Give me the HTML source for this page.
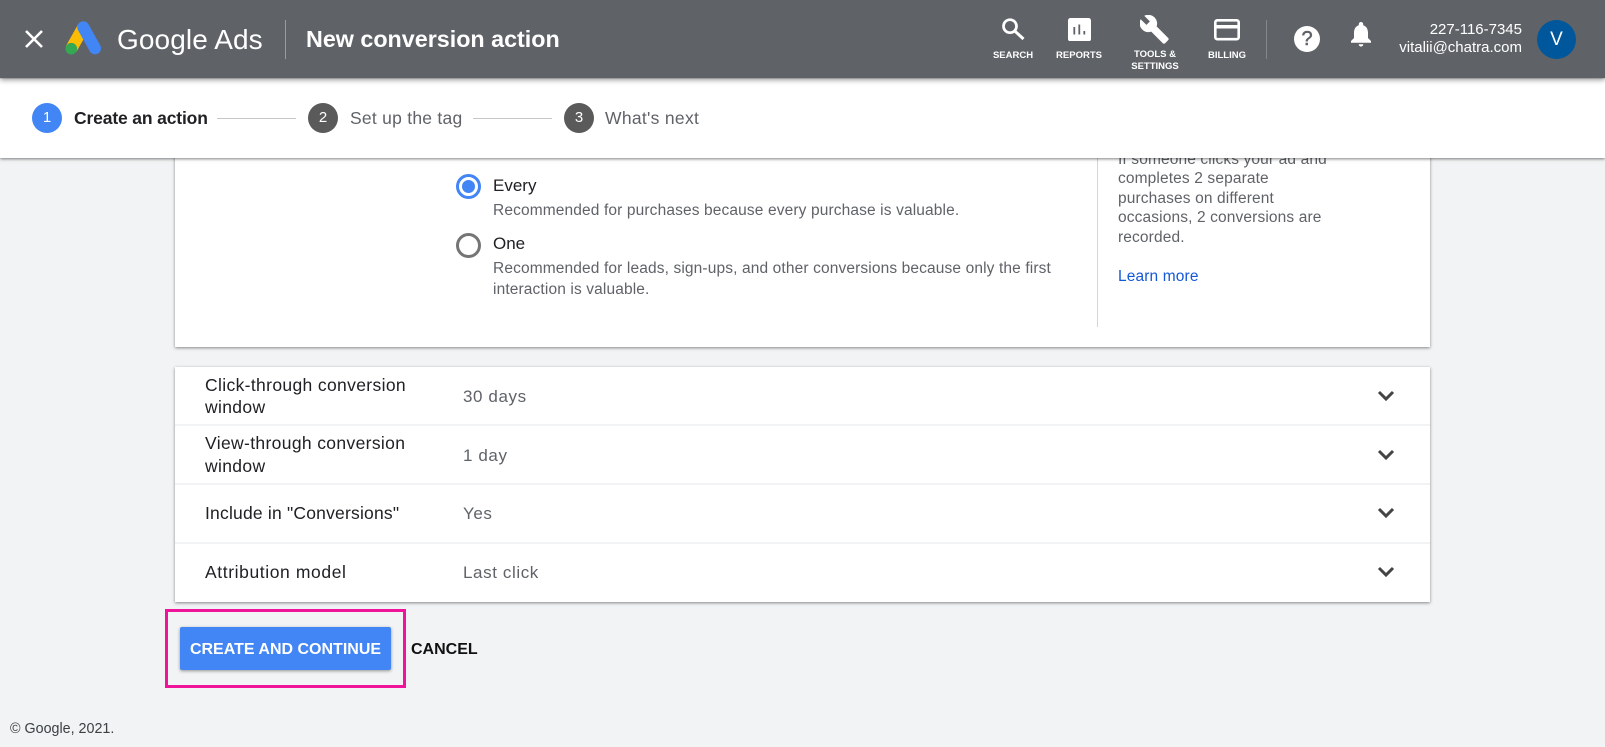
<!DOCTYPE html>
<html><head><meta charset="utf-8"><style>
html,body{margin:0;padding:0}
body{width:1605px;height:747px;position:relative;overflow:hidden;background:#f1f3f4;font-family:"Liberation Sans",sans-serif}
.t{position:absolute;white-space:nowrap;line-height:20px}
.abs{position:absolute}
.lab{font-size:9.5px;font-weight:bold;color:#fff;text-align:center;transform:translateX(-50%);line-height:12px}
.num{position:absolute;width:30px;height:30px;border-radius:50%;color:#fff;font-size:15px;line-height:30px;text-align:center;background:#5a5a5a;top:103px}
.line{position:absolute;height:1px;background:#c4c6c8;top:118px}
.row{font-size:17.5px;color:#202124;letter-spacing:.35px}
.val{font-size:17px;color:#5f6368;letter-spacing:.6px}
.sub{font-size:15.5px;color:#5f6368;letter-spacing:.13px}
.div{position:absolute;left:175px;width:1255px;height:2px;background:#f1f3f4}
</style></head><body>
<div class="abs" style="left:175px;top:100px;width:1255px;height:247px;background:#fff;box-shadow:0 1px 3px rgba(0,0,0,.45)"></div>
<div class="abs" style="left:1097px;top:150px;width:1px;height:177px;background:#d5d7d9"></div>
<div class="abs" style="left:175px;top:367px;width:1255px;height:235px;background:#fff;box-shadow:0 1px 3px rgba(0,0,0,.45)"></div>
<div class="div" style="top:424px"></div><div class="div" style="top:483px"></div><div class="div" style="top:542px"></div>

<div class="t sub" style="left:1118px;top:150px">If someone clicks your ad and</div>
<div class="t sub" style="left:1118px;top:169px">completes 2 separate</div>
<div class="t sub" style="left:1118px;top:189px">purchases on different</div>
<div class="t sub" style="left:1118px;top:208px">occasions, 2 conversions are</div>
<div class="t sub" style="left:1118px;top:228px">recorded.</div>
<div class="t sub" style="left:1118px;top:267px;color:#1558d6">Learn more</div>

<div class="abs" style="left:0;top:79px;width:1605px;height:78.500px;background:#fff;box-shadow:0 1px 3px rgba(0,0,0,.5)"></div>
<div class="abs" style="left:0;top:0;width:1605px;height:78px;background:#5f6368;box-shadow:0 2px 5px rgba(0,0,0,.4)"></div>

<svg class="abs" style="left:25px;top:30px" width="18" height="18" viewBox="0 0 18 18"><path d="M1 1L17 17M17 1L1 17" stroke="#fff" stroke-width="2.600" fill="none"/></svg>
<svg class="abs" style="left:64px;top:21px" width="40" height="34" viewBox="0 0 40 34">
<path d="M19.500 6L7.300 27.700" stroke="#fbbc04" stroke-width="12"/>
<path d="M19.300 6.300L31 27.300" stroke="#4285f4" stroke-width="12" stroke-linecap="round"/>
<circle cx="7.300" cy="27.700" r="5.800" fill="#34a853"/></svg>
<div class="t" style="left:117px;top:26px;font-size:28px;line-height:28px;color:#fff;letter-spacing:.1px">Google Ads</div>
<div class="abs" style="left:285px;top:20px;width:1px;height:39px;background:#9a9da0"></div>
<div class="t" style="left:306px;top:27px;font-size:23.300px;line-height:24px;font-weight:bold;color:#fff">New conversion action</div>

<svg class="abs" style="left:1001px;top:17px" width="25" height="25" viewBox="0 0 25 25"><circle cx="9" cy="9.200" r="6.500" stroke="#fff" stroke-width="2.700" fill="none"/><path d="M13.800 14L22.500 22" stroke="#fff" stroke-width="3"/></svg>
<svg class="abs" style="left:1068px;top:17.500px" width="23" height="23.500" viewBox="0 0 23 23.500"><rect width="23" height="23.500" rx="2.500" fill="#fff"/><path d="M6.300 9v7.500M11.300 6.500v10M16.300 13v3.500" stroke="#5f6368" stroke-width="1.800"/></svg>
<svg class="abs" style="left:1140px;top:15px" width="29" height="29" viewBox="1 1 22.500 22.500"><path fill="#fff" stroke="#fff" stroke-width=".5" d="M22.700 19l-9.100-9.100c.9-2.300.4-5-1.500-6.900-2-2-5-2.400-7.400-1.300L9 6 6 9 1.600 4.700C.4 7.100.9 10.100 2.900 12.100c1.900 1.900 4.600 2.400 6.900 1.500l9.100 9.100c.4.400 1 .4 1.400 0l2.300-2.300c.5-.4.500-1.100.100-1.400z"/></svg>
<svg class="abs" style="left:1214px;top:19px" width="26" height="21.500" viewBox="0 0 26 21.500"><rect x="1.300" y="1.300" width="23.400" height="18.900" rx="2" fill="none" stroke="#fff" stroke-width="2.600"/><rect x="1" y="6" width="24" height="3.500" fill="#fff"/></svg>
<div class="t lab" style="left:1013px;top:49.500px">SEARCH</div>
<div class="t lab" style="left:1079px;top:49.500px">REPORTS</div>
<div class="t lab" style="left:1155px;top:49px">TOOLS &amp;<br>SETTINGS</div>
<div class="t lab" style="left:1227px;top:49.500px">BILLING</div>
<div class="abs" style="left:1266px;top:20px;width:1px;height:39px;background:#85888b"></div>
<div class="abs" style="left:1294px;top:26px;width:26px;height:26px;border-radius:50%;background:#fff;color:#5f6368;font-size:20px;line-height:26px;text-align:center;-webkit-text-stroke:.5px #5f6368">?</div>
<svg class="abs" style="left:1350px;top:21px" width="22" height="27" viewBox="0 0 22 27"><path fill="#fff" d="M11 1c1.300 0 2.200 1 2.200 2.200v1C16.800 5.300 18 8.500 18 12v5l3 3v1.800H1V20l3-3v-5c0-3.500 1.200-6.700 4.800-7.800v-1C8.800 2 9.700 1 11 1zM8.700 23.300h4.600a2.300 2.300 0 0 1-4.600 0z"/></svg>
<div class="t" style="right:83px;top:20px;font-size:15px;color:#fff">227-116-7345</div>
<div class="t" style="right:83px;top:38px;font-size:15px;color:#fff">vitalii@chatra.com</div>
<div class="abs" style="left:1537px;top:20px;width:39px;height:39px;border-radius:50%;background:#01579b;color:#fff;font-size:19px;line-height:39px;text-align:center">V</div>

<div class="num" style="left:32px;background:#4285f4">1</div>
<div class="t" style="left:74px;top:108px;font-size:17.500px;font-weight:bold;color:#202124;letter-spacing:-.15px">Create an action</div>
<div class="line" style="left:217px;width:79px"></div>
<div class="num" style="left:308px">2</div>
<div class="t" style="left:350px;top:108px;font-size:17.500px;color:#5f6368;letter-spacing:.25px">Set up the tag</div>
<div class="line" style="left:473px;width:79px"></div>
<div class="num" style="left:564px">3</div>
<div class="t" style="left:605px;top:108px;font-size:17.500px;color:#5f6368;letter-spacing:.3px">What's next</div>

<div class="abs" style="left:456px;top:174px;width:25px;height:25px;box-sizing:border-box;border:3px solid #4285f4;border-radius:50%"></div>
<div class="abs" style="left:462px;top:180px;width:13px;height:13px;background:#4285f4;border-radius:50%"></div>
<div class="t" style="left:493px;top:176px;font-size:17px;color:#202124">Every</div>
<div class="t sub" style="left:493px;top:201px">Recommended for purchases because every purchase is valuable.</div>
<div class="abs" style="left:456px;top:233px;width:25px;height:25px;box-sizing:border-box;border:3px solid #757575;border-radius:50%"></div>
<div class="t" style="left:493px;top:234px;font-size:17px;color:#202124">One</div>
<div class="t sub" style="left:493px;top:259px">Recommended for leads, sign-ups, and other conversions because only the first</div>
<div class="t sub" style="left:493px;top:280px">interaction is valuable.</div>

<div class="t row" style="left:205px;top:375px">Click-through conversion</div>
<div class="t row" style="left:205px;top:396.500px">window</div>
<div class="t val" style="left:463px;top:387px">30 days</div>
<div class="t row" style="left:205px;top:433px">View-through conversion</div>
<div class="t row" style="left:205px;top:456px">window</div>
<div class="t val" style="left:463px;top:446px">1 day</div>
<div class="t row" style="left:205px;top:503px;letter-spacing:.2px">Include in "Conversions"</div>
<div class="t val" style="left:463px;top:504px">Yes</div>
<div class="t row" style="left:205px;top:562px;letter-spacing:.6px">Attribution model</div>
<div class="t val" style="left:463px;top:563px">Last click</div>
<svg class="abs" style="left:1377px;top:390px" width="18" height="12" viewBox="0 0 18 12"><path d="M2 2L9 9L16 2" fill="none" stroke="#444" stroke-width="3"/></svg>
<svg class="abs" style="left:1377px;top:449px" width="18" height="12" viewBox="0 0 18 12"><path d="M2 2L9 9L16 2" fill="none" stroke="#444" stroke-width="3"/></svg>
<svg class="abs" style="left:1377px;top:507px" width="18" height="12" viewBox="0 0 18 12"><path d="M2 2L9 9L16 2" fill="none" stroke="#444" stroke-width="3"/></svg>
<svg class="abs" style="left:1377px;top:566px" width="18" height="12" viewBox="0 0 18 12"><path d="M2 2L9 9L16 2" fill="none" stroke="#444" stroke-width="3"/></svg>

<div class="abs" style="left:165px;top:609px;width:241px;height:79px;box-sizing:border-box;border:3px solid #f0149a"></div>
<div class="abs" style="left:180px;top:627px;width:211px;height:43px;background:#4285f4;border-radius:2px;box-shadow:0 1px 3px rgba(0,0,0,.4);color:#fff;font-size:16px;font-weight:bold;line-height:45px;text-align:center;white-space:nowrap">CREATE AND CONTINUE</div>
<div class="t" style="left:411px;top:640px;font-size:16px;font-weight:bold;color:#111">CANCEL</div>
<div class="t" style="left:10px;top:719px;font-size:14.300px;color:#3c4043">© Google, 2021.</div>
</body></html>
